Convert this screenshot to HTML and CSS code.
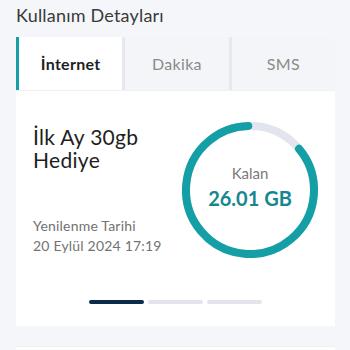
FILE: index.html
```html
<!DOCTYPE html>
<html lang="tr">

<head>
    <meta charset="UTF-8">
    <meta name="viewport" content="width=device-width, initial-scale=1.0">
    <title>Kullanım Detayları</title>
    <link rel="stylesheet" href="styles.css">
</head>

<body>
    <div class="page">
        <h2 class="title">Kullanım Detayları</h2>
        <div class="tabs">
            <div class="tab active">İnternet</div>
            <div class="tab">Dakika</div>
            <div class="tab">SMS</div>
        </div>
        <div class="card">
            <div class="usage">
                <div class="plan">
                    <div class="plan-name">İlk Ay 30gb Hediye</div>
                    <div class="renew">
                        <p>Yenilenme Tarihi</p>
                        <p>20 Eylül 2024 17:19</p>
                    </div>
                </div>
                <div class="gauge">
                    <svg width="136" height="136" viewBox="0 0 136 136">
                        <circle cx="68" cy="68" r="64" fill="none" stroke="#e3e5ee" stroke-width="8" />
                        <!-- kalan: 26.01 / 30 -->
                        <circle cx="68" cy="68" r="64" fill="none" stroke="#149fa6" stroke-width="8"
                            stroke-linecap="round" stroke-dasharray="344 402" transform="rotate(-40 68 68)" />
                    </svg>
                    <div class="gauge-text">
                        <span class="label">Kalan</span>
                        <span class="value">26.01 GB</span>
                    </div>
                </div>
            </div>
            <div class="dots">
                <span class="dot current"></span>
                <span class="dot"></span>
                <span class="dot"></span>
            </div>
        </div>
        <div class="card next"></div>
    </div>
</body>

</html>
```

FILE: styles.css
```css
body {
    margin: 0;
    background-color: #f5f6f9;
    font-family: Lato, "Noto Sans", sans-serif;
    color: #2b2b2b;
}

.page {
    padding: 0 15px 0 16px;
}

.title {
    margin: 0;
    height: 37px;
    line-height: 30px;
    font-size: 18px;
    font-weight: 400;
    letter-spacing: 0.2px;
    color: #3a3a3a;
}

.tabs {
    display: flex;
    gap: 3px;
    height: 53px;
    background-color: #e6e8ee;
}

.tab {
    flex: 1;
    display: flex;
    align-items: center;
    justify-content: center;
    background-color: #f4f5f8;
    font-size: 16px;
    letter-spacing: 0.3px;
    color: #8a8a8a;
}

.tab.active {
    border-left: 3px solid #149fa6;
    background-color: #fff;
    font-weight: 700;
    color: #1e1e28;
}

.card {
    height: 236px;
    background-color: #fff;
    border-top: 1px solid #eef0f4;
    box-sizing: border-box;
}

.card.next {
    margin-top: 20px;
}

.usage {
    display: flex;
    justify-content: space-between;
    padding: 31px 17px 0;
}

.plan {
    display: flex;
    flex-direction: column;
    justify-content: space-between;
    padding: 3px 0 2px;
}

.plan-name {
    width: 130px;
    font-size: 21px;
    line-height: 23px;
    letter-spacing: 0.3px;
    color: #1e1e1e;
}

.renew p {
    margin: 0;
    font-size: 14px;
    line-height: 20px;
    letter-spacing: 0.2px;
    color: #727272;
}

.gauge {
    display: grid;
    width: 136px;
    height: 136px;
}

.gauge svg,
.gauge-text {
    grid-area: 1 / 1;
}

.gauge-text {
    display: flex;
    flex-direction: column;
    align-items: center;
    justify-content: center;
    padding-bottom: 6px;
}

.gauge-text .label {
    font-size: 15px;
    color: #7a7a7a;
}

.gauge-text .value {
    margin-top: 4px;
    font-size: 20px;
    font-weight: 700;
    color: #15878f;
}

.dots {
    display: flex;
    justify-content: center;
    gap: 4px;
    margin-top: 42px;
}

.dot {
    width: 55px;
    height: 4px;
    border-radius: 2px;
    background-color: #e3e4ee;
}

.dot.current {
    background-color: #0d2a4d;
}
```
